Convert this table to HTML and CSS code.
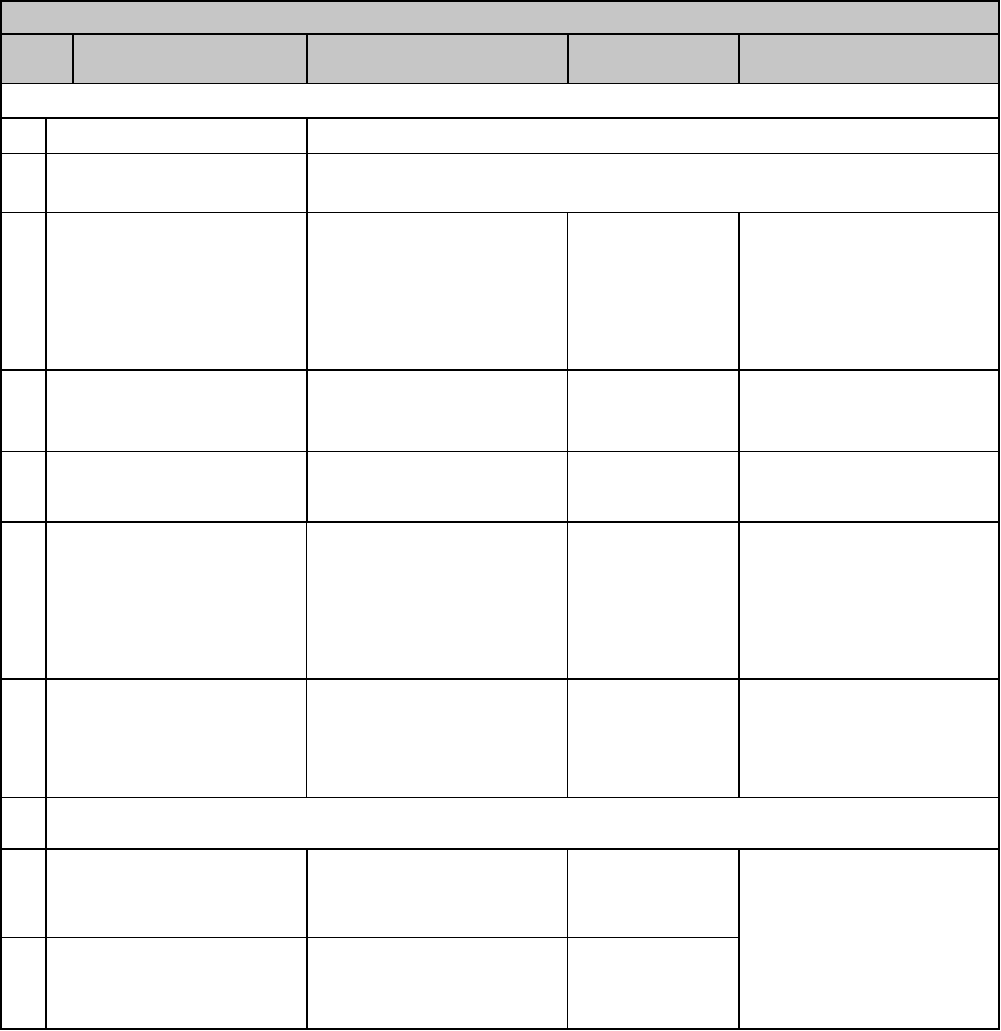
FILE: index.html
```html
<!DOCTYPE html>
<html lang="en">
<head>
    <meta charset="UTF-8">
    <meta name="viewport" content="width=device-width, initial-scale=1.0">
    <title>Form Grid</title>
    <link rel="stylesheet" href="styles.css">
</head>
<body>
    <table class="form-grid">
        <colgroup>
            <col class="col-no">
            <col class="col-gap">
            <col class="col-item">
            <col class="col-wide">
            <col class="col-mid">
            <col class="col-last">
        </colgroup>

        <!-- title + column heads -->
        <tr class="head thick h-33"><td colspan="6"></td></tr>
        <tr class="head thick h-50">
            <td colspan="2"></td>
            <td></td>
            <td></td>
            <td></td>
            <td></td>
        </tr>
        <tr class="h-34"><td colspan="6"></td></tr>

        <!-- general rows -->
        <tr class="thick h-36">
            <td></td>
            <td colspan="2"></td>
            <td colspan="3"></td>
        </tr>
        <tr class="h-59">
            <td></td>
            <td colspan="2"></td>
            <td colspan="3"></td>
        </tr>

        <!-- detail rows -->
        <tr class="h-157">
            <td></td>
            <td colspan="2"></td>
            <td></td>
            <td class="thin-left"></td>
            <td></td>
        </tr>
        <tr class="thick h-82">
            <td></td>
            <td colspan="2"></td>
            <td></td>
            <td class="thin-left"></td>
            <td></td>
        </tr>
        <tr class="h-70">
            <td></td>
            <td colspan="2"></td>
            <td></td>
            <td class="thin-left"></td>
            <td></td>
        </tr>
        <tr class="thick h-157">
            <td></td>
            <td colspan="2"></td>
            <td class="thin-left"></td>
            <td class="thin-left"></td>
            <td></td>
        </tr>
        <tr class="thick h-119">
            <td></td>
            <td colspan="2"></td>
            <td class="thin-left"></td>
            <td class="thin-left"></td>
            <td></td>
        </tr>

        <!-- section break -->
        <tr class="h-51">
            <td></td>
            <td colspan="5"></td>
        </tr>

        <tr class="thick h-89">
            <td></td>
            <td colspan="2"></td>
            <td></td>
            <td class="thin-left"></td>
            <td rowspan="2"></td>
        </tr>
        <tr class="h-91">
            <td></td>
            <td colspan="2"></td>
            <td></td>
            <td class="thin-left"></td>
        </tr>
    </table>
</body>
</html>
```

FILE: styles.css
```css
:root {
    --line-color: #000;
    --head-bg: #c6c6c6;
}

body {
    margin: 0;
    background-color: #ffffff;
    font-family: "Liberation Sans", Arial, sans-serif;
}

.form-grid {
    width: 1000px;
    table-layout: fixed;
    border-collapse: separate;
    border-spacing: 0;
    border-right: 2px solid var(--line-color);
    border-bottom: 2px solid var(--line-color);
}

.col-no { width: 45px; }
.col-gap { width: 27px; }
.col-item { width: 234px; }
.col-wide { width: 261px; }
.col-mid { width: 171px; }
.col-last { width: 260px; }

.form-grid td {
    padding: 0;
    border-top: 1px solid var(--line-color);
    border-left: 2px solid var(--line-color);
    background: #fff;
}

.form-grid tr.thick td {
    border-top-width: 2px;
}

.form-grid td.thin-left {
    border-left-width: 1px;
}

.form-grid tr.head td {
    background: var(--head-bg);
}

/* row heights */
.h-33 { height: 33px; }
.h-34 { height: 34px; }
.h-36 { height: 36px; }
.h-50 { height: 50px; }
.h-51 { height: 51px; }
.h-59 { height: 59px; }
.h-70 { height: 70px; }
.h-82 { height: 82px; }
.h-89 { height: 89px; }
.h-91 { height: 91px; }
.h-119 { height: 119px; }
.h-157 { height: 157px; }
```
